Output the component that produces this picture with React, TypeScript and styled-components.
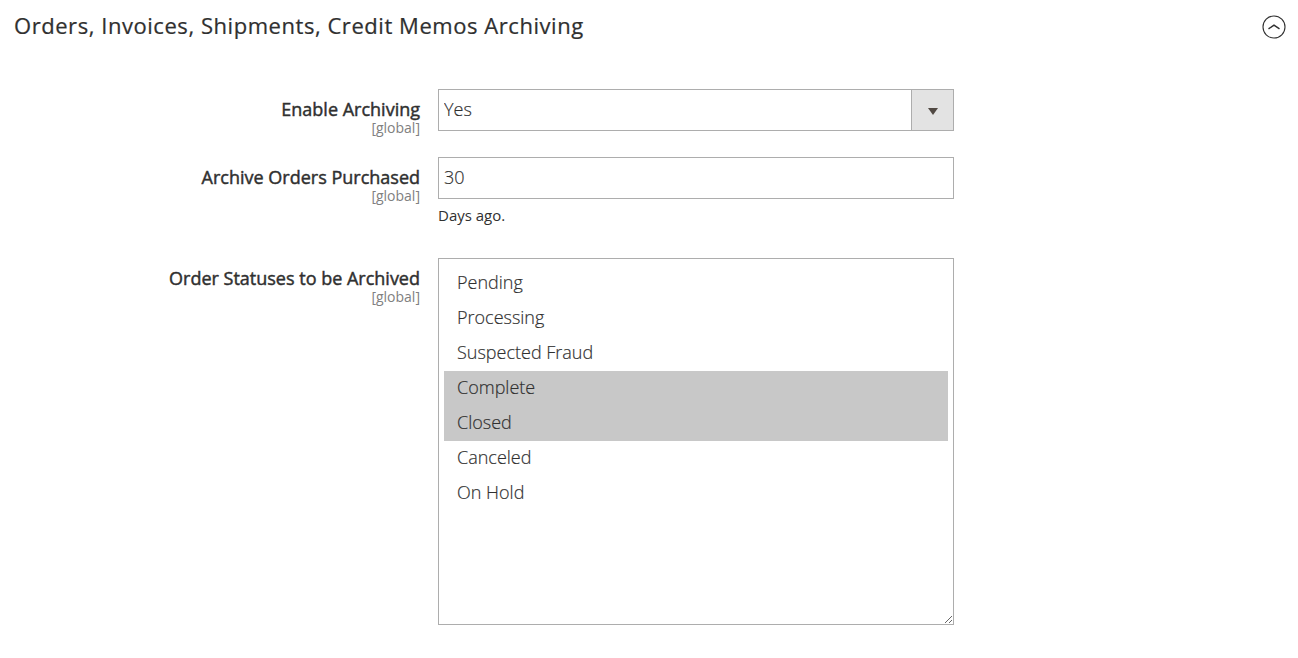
import React, { useState } from "react";
import styled, { createGlobalStyle } from "styled-components";

const GlobalStyle = createGlobalStyle`
  *, *::before, *::after { box-sizing: border-box; }
  body {
    margin: 0;
    background: #fff;
    color: #303030;
    font-family: "Open Sans", "Noto Sans", sans-serif;
    font-size: 18px;
  }
`;

const Section = styled.section`
  padding: 0 14px 32px;
`;

const SectionHeader = styled.header`
  display: flex;
  align-items: flex-start;
  justify-content: space-between;
  padding: 10px 0;
`;

const SectionTitle = styled.h2`
  margin: 0;
  font-size: 22px;
  font-weight: 400;
  line-height: 30px;
  letter-spacing: 0.025em;
  -webkit-text-stroke: 0.01em currentColor;
`;

const CollapseButton = styled.button<{ $open: boolean }>`
  display: flex;
  margin: 4px -2px 0 0;
  padding: 0;
  border: 0;
  background: none;
  color: #303030;
  cursor: pointer;

  svg {
    width: 25px;
    height: 25px;
    transform: ${({ $open }) => ($open ? "none" : "rotate(180deg)")};
  }
`;

const Form = styled.form`
  display: flex;
  flex-direction: column;
  gap: 22px;
  padding-top: 39px;
`;

const Row = styled.div`
  display: grid;
  grid-template-columns: 406fr 516fr 312fr;
  column-gap: 18px;
  align-items: start;
`;

const LabelCell = styled.div`
  display: flex;
  flex-direction: column;
  padding-top: 8px;
  text-align: right;
`;

const Label = styled.label`
  font-weight: 400;
  line-height: 24px;
  -webkit-text-stroke: 0.025em currentColor;
`;

const Scope = styled.span`
  color: #808080;
  font-size: 14px;
  line-height: 14px;
`;

const SelectBox = styled.div`
  position: relative;
`;

const Select = styled.select`
  appearance: none;
  display: block;
  width: 100%;
  height: 42px;
  padding: 0 48px 2px 5px;
  border: 1px solid #adadad;
  border-radius: 0;
  background: #fff;
  color: #303030;
  font: inherit;
  font-weight: 300;
  -webkit-text-stroke: 0.01em currentColor;
`;

const SelectArrow = styled.span`
  position: absolute;
  inset: 0 0 0 auto;
  display: flex;
  align-items: center;
  justify-content: center;
  width: 43px;
  padding-top: 2px;
  border: 1px solid #adadad;
  background: #e3e3e3;
  pointer-events: none;
`;

const TextInput = styled.input`
  display: block;
  width: 100%;
  height: 42px;
  padding: 0 5px 2px;
  border: 1px solid #adadad;
  border-radius: 0;
  background: #fff;
  color: #303030;
  font: inherit;
  font-weight: 300;
  -webkit-text-stroke: 0.01em currentColor;
`;

const Note = styled.p`
  margin: 6px 0 11px;
  font-size: 15px;
  line-height: 20px;
`;

const MultiSelect = styled.select`
  display: block;
  width: 100%;
  height: 367px;
  padding: 7px 5px;
  border: 1px solid #adadad;
  border-radius: 0;
  background: #fff;
  color: #303030;
  font: inherit;
  overflow: auto;
  resize: both;

  option {
    min-height: 35px;
    padding: 4px 13px;
    color: #303030;
    font-weight: 300;
    line-height: 27px;
    -webkit-text-stroke: 0.01em currentColor;
  }

  option:checked {
    background: #c8c8c8 linear-gradient(#c8c8c8, #c8c8c8);
    color: #303030;
  }
`;

const statuses = [
  "Pending",
  "Processing",
  "Suspected Fraud",
  "Complete",
  "Closed",
  "Canceled",
  "On Hold",
];

type FieldProps = { id: string; label: string; children: React.ReactNode };

function Field({ id, label, children }: FieldProps) {
  return (
    <Row>
      <LabelCell>
        <Label htmlFor={id}>{label}</Label>
        <Scope>[global]</Scope>
      </LabelCell>
      <div>{children}</div>
    </Row>
  );
}

export default function App() {
  const [open, setOpen] = useState(true);

  return (
    <>
      <GlobalStyle />
      <Section>
        <SectionHeader>
          <SectionTitle>Orders, Invoices, Shipments, Credit Memos Archiving</SectionTitle>
          <CollapseButton
            type="button"
            $open={open}
            aria-expanded={open}
            aria-label="Toggle section"
            onClick={() => setOpen(!open)}
          >
            <svg viewBox="0 0 25 25" fill="none" stroke="currentColor" aria-hidden="true">
              <circle cx="13" cy="13" r="11" strokeWidth="1.1" />
              <path d="M7.5 14.9 13 11.1 18.5 14.9" strokeWidth="1.4" />
            </svg>
          </CollapseButton>
        </SectionHeader>
        {open && (
          <Form>
            <Field id="enable" label="Enable Archiving">
              <SelectBox>
                <Select id="enable" defaultValue="Yes">
                  <option>Yes</option>
                  <option>No</option>
                </Select>
                <SelectArrow>
                  <svg width="10" height="7" viewBox="0 0 10 7" aria-hidden="true">
                    <path d="M0 0H10L5 7Z" fill="#514943" />
                  </svg>
                </SelectArrow>
              </SelectBox>
            </Field>
            <Field id="age" label="Archive Orders Purchased">
              <TextInput id="age" type="text" defaultValue="30" />
              <Note>Days ago.</Note>
            </Field>
            <Field id="statuses" label="Order Statuses to be Archived">
              <MultiSelect id="statuses" multiple defaultValue={["Complete", "Closed"]}>
                {statuses.map((status) => (
                  <option key={status}>{status}</option>
                ))}
              </MultiSelect>
            </Field>
          </Form>
        )}
      </Section>
    </>
  );
}
